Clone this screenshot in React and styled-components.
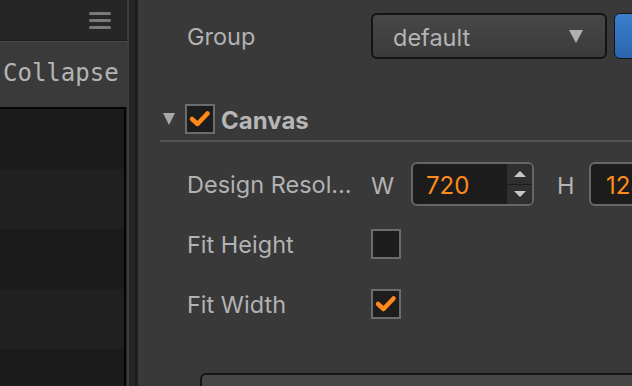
import React from 'react';
import styled, { createGlobalStyle } from 'styled-components';

const Global = createGlobalStyle`
  html, body { margin: 0; padding: 0; background: #393939; }
  body { width: 632px; height: 386px; overflow: hidden; }
  #root { height: 386px; }
`;

const Shell = styled.div`
  display: flex;
  width: 632px;
  height: 386px;
  overflow: hidden;
`;

const Sidebar = styled.div`
  width: 127px;
  flex: none;
  display: flex;
  flex-direction: column;
  background: #262626;
`;

const SideHeader = styled.div`
  height: 40px;
  flex: none;
  display: flex;
  justify-content: flex-end;
  align-items: center;
  padding-right: 16px;
  border-bottom: 1px solid #1c1c1c;
`;

const Burger = styled.div`
  width: 22px;
  display: flex;
  flex-direction: column;
  gap: 4px;
  margin-top: 1px;
  & > span {
    display: block;
    height: 3px;
    border-radius: 2px;
    background: #7a7a7a;
  }
`;

const CollapseBar = styled.div`
  height: 66px;
  flex: none;
  display: flex;
  align-items: center;
  padding-left: 3px;
  padding-bottom: 4px;
  box-sizing: border-box;
  background: #3a3a3a;
  border-top: 1px solid #4a4a4a;
  font-family: "DejaVu Sans Mono", "Liberation Mono", monospace;
  font-size: 24px;
  color: #b4b4b4;
  white-space: nowrap;
`;

const List = styled.div`
  flex: 1;
  display: flex;
  flex-direction: column;
  margin-right: 1px;
  border-top: 2px solid #050505;
  border-right: 2px solid #050505;
  overflow: hidden;
`;

const ListRow = styled.div`
  height: 60px;
  flex: none;
  background: ${p => (p.$alt ? '#202020' : '#1b1b1b')};
`;

const Splitter = styled.div`
  width: 6px;
  flex: none;
  background: #262626;
  border-left: 2px solid #3c3c3c;
  border-right: 3px solid #1e1e1e;
`;

const Main = styled.div`
  flex: 1;
  min-width: 0;
  background: #393939;
  padding-left: 22px;
  display: flex;
  flex-direction: column;
  overflow: hidden;
  font-family: Inter, "Liberation Sans", sans-serif;
  color: #b2b2b2;
`;

const Row = styled.div`
  display: flex;
  align-items: center;
  height: ${p => p.$h || 60}px;
  margin-top: ${p => p.$mt || 0}px;
  padding-left: 27px;
  flex: none;
`;

const Label = styled.div`
  width: 184px;
  flex: none;
  font-size: 23.5px;
  line-height: 30px;
  padding-top: 2px;
  white-space: nowrap;
  overflow: hidden;
  text-overflow: ellipsis;
  padding-right: ${p => p.$pr || 0}px;
  box-sizing: border-box;
`;

const Select = styled.div`
  width: 236px;
  height: 46px;
  box-sizing: border-box;
  flex: none;
  border: 2px solid #141414;
  border-radius: 6px;
  background: linear-gradient(#474747, #3b3b3b);
  display: flex;
  align-items: center;
  justify-content: space-between;
  padding: 2px 22px 0 20px;
  font-size: 23.5px;
  color: #b4b4b4;
`;

const Caret = styled.span`
  width: 0;
  height: 0;
  border-left: 7px solid transparent;
  border-right: 7px solid transparent;
  border-top: 13px solid #b0b0b0;
  margin-top: -2px;
`;

const BlueButton = styled.div`
  width: 40px;
  height: 44px;
  flex: none;
  margin-left: 7px;
  border: 1px solid #161616;
  border-radius: 6px;
  background: linear-gradient(#3b7fcf, #2a65ac);
`;

const SectionHeader = styled.div`
  height: 42px;
  margin-top: 39px;
  flex: none;
  display: flex;
  align-items: center;
  border-bottom: 2px solid #535353;
  padding-left: 3px;
`;

const Fold = styled.span`
  width: 0;
  height: 0;
  border-left: 6.5px solid transparent;
  border-right: 6.5px solid transparent;
  border-top: 12px solid #a8a8a8;
  margin-right: 10px;
`;

const SectionTitle = styled.div`
  font-size: 24px;
  font-weight: 700;
  color: #b6b6b6;
  margin-left: 6px;
  padding-top: 2px;
`;

const Box = styled.div`
  width: 30px;
  height: 30px;
  box-sizing: border-box;
  flex: none;
  border: 2px solid #6c6c6c;
  background: #1d1d1d;
  display: flex;
  align-items: center;
  justify-content: center;
`;

const Axis = styled.div`
  font-size: 23.5px;
  width: ${p => p.$w}px;
  padding-left: ${p => p.$pl || 0}px;
  padding-top: 2px;
  box-sizing: border-box;
  flex: none;
  color: #b4b4b4;
`;

const NumField = styled.div`
  width: 123px;
  height: 44px;
  box-sizing: border-box;
  flex: none;
  border: 2px solid #666;
  border-radius: 6px;
  background: #1c1c1c;
  display: flex;
  overflow: hidden;
`;

const NumValue = styled.div`
  flex: 1;
  display: flex;
  align-items: center;
  padding-left: ${p => p.$pl || 13}px;
  padding-top: 2px;
  font-size: 24px;
  color: #ff8b1a;
`;

const Spinner = styled.div`
  width: 25px;
  flex: none;
  background: #2f2f2f;
  display: flex;
  flex-direction: column;
`;

const SpinHalf = styled.div`
  flex: 1;
  display: flex;
  align-items: center;
  justify-content: center;
  border-top: ${p => (p.$bottom ? '1px solid #1c1c1c' : 'none')};
`;

const Tri = styled.span`
  width: 0;
  height: 0;
  border-left: 6px solid transparent;
  border-right: 6px solid transparent;
  ${p => (p.$down ? 'border-top: 6px solid #c8c8c8;' : 'border-bottom: 6px solid #c8c8c8;')}
`;

const Footer = styled.div`
  margin-top: 39px;
  margin-left: 40px;
  height: 40px;
  flex: none;
  border: 2px solid #151515;
  border-radius: 6px;
  background: linear-gradient(#484848, #404040);
  width: 600px;
`;

const Check = () => (
  <svg width="26" height="26" viewBox="0 0 26 26">
    <path d="M5 13 L10.5 18 L20.5 7.5" fill="none" stroke="#ff8a1a" strokeWidth="4.5" strokeLinecap="round" strokeLinejoin="round" />
  </svg>
);

export default function App() {
  return (
    <Shell>
      <Global />
      <Sidebar>
        <SideHeader>
          <Burger><span /><span /><span /></Burger>
        </SideHeader>
        <CollapseBar>Collapse</CollapseBar>
        <List>
          {[0, 1, 2, 3, 4].map(i => <ListRow key={i} $alt={i % 2 === 1} />)}
        </List>
      </Sidebar>
      <Splitter />
      <Main>
        <Row $h={46} $mt={13}>
          <Label>Group</Label>
          <Select>default<Caret /></Select>
          <BlueButton />
        </Row>
        <SectionHeader>
          <Fold />
          <Box><Check /></Box>
          <SectionTitle>Canvas</SectionTitle>
        </SectionHeader>
        <Row $h={60} $mt={12}>
          <Label $pr={16}>Design Resolution</Label>
          <Axis $w={40}>W</Axis>
          <NumField>
            <NumValue>720</NumValue>
            <Spinner>
              <SpinHalf><Tri /></SpinHalf>
              <SpinHalf $bottom><Tri $down /></SpinHalf>
            </Spinner>
          </NumField>
          <Axis $w={55} $pl={23}>H</Axis>
          <NumField>
            <NumValue $pl={15}>1280</NumValue>
          </NumField>
        </Row>
        <Row $h={60}>
          <Label>Fit Height</Label>
          <Box />
        </Row>
        <Row $h={60}>
          <Label>Fit Width</Label>
          <Box><Check /></Box>
        </Row>
        <Footer />
      </Main>
    </Shell>
  );
}
